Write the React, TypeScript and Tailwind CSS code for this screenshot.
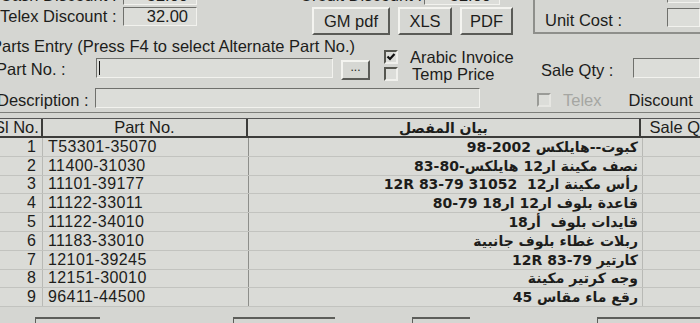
import React from 'react'

const sunken = 'border border-t-[#6f706c] border-l-[#6f706c] border-b-[#f2f2ee] border-r-[#f2f2ee] bg-[#dcddd9]'
const raised = 'border-2 border-t-[#f4f4f0] border-l-[#f4f4f0] border-b-[#5a5b57] border-r-[#5a5b57] bg-[#d6d7d3]'

const rows = [
  { no: 1, part: 'T53301-35070', desc: 'كبوت--هايلكس 2002-98' },
  { no: 2, part: '11400-31030', desc: 'نصف مكينة ار12 هايلكس-80-83' },
  { no: 3, part: '11101-39177', desc: 'رأس مكينة ار12  31052 79-83 12R ' },
  { no: 4, part: '11122-33011', desc: 'قاعدة بلوف ار12 ار18 79-80' },
  { no: 5, part: '11122-34010', desc: 'قايدات بلوف  أر18 ' },
  { no: 6, part: '11183-33010', desc: 'ربلات غطاء بلوف جانبية' },
  { no: 7, part: '12101-39245', desc: 'كارتير 79-83 12R ' },
  { no: 8, part: '12151-30010', desc: 'وجه كرتير مكينة' },
  { no: 9, part: '96411-44500', desc: 'رقع ماء مقاس 45' },
]

function Check({ checked, disabled }: { checked?: boolean; disabled?: boolean }) {
  return (
    <span
      className={`flex h-[14px] w-[14px] shrink-0 items-center justify-center border-2 ${
        disabled ? 'border-t-[#9a9b97] border-l-[#9a9b97] border-b-[#e6e6e2] border-r-[#e6e6e2]' : 'border-t-[#55564f] border-l-[#55564f] border-b-[#f0f0ec] border-r-[#f0f0ec]'
      } bg-[#dcddd9]`}
    >
      {checked && (
        <svg width="10" height="10" viewBox="0 0 10 10">
          <path d="M1.5 4.5 L4 7 L8.5 2" stroke="#111" strokeWidth="2.2" fill="none" />
        </svg>
      )}
    </span>
  )
}

export default function App() {
  return (
    <div className="h-[323px] w-[700px] overflow-hidden bg-[#d5d6d2] text-[16.5px] leading-none text-[#1d1d1b] [font-family:'Liberation_Sans',Arial,sans-serif]">
      {/* top area */}
      <div className="-mt-[14px] flex h-[48px]">
        <div className="flex w-[533px] flex-col">
          <div className="flex h-[22px] items-center">
            <span className="w-[123px] whitespace-nowrap">Cash Discount :</span>
            <span className={`flex h-[19px] w-[74px] items-center justify-end pr-2 ${sunken}`}>32.00</span>
            <span className="ml-[103px] w-[124px] whitespace-nowrap">Credit Discount :</span>
            <span className={`flex h-[19px] w-[76px] items-center justify-end pr-2 ${sunken}`}>32.00</span>
          </div>
          <div className="flex items-start pt-[2px]">
            <div className="flex h-[19px] items-center">
              <span className="w-[123px] whitespace-nowrap">Telex Discount :</span>
              <span className={`flex h-[19px] w-[74px] items-center justify-end pr-2 ${sunken}`}>32.00</span>
            </div>
            <div className="ml-[115px] flex gap-[8px]">
              <button className={`h-[28px] w-[78px] ${raised}`}>GM pdf</button>
              <button className={`h-[28px] w-[54px] ${raised}`}>XLS</button>
              <button className={`h-[28px] w-[53px] ${raised}`}>PDF</button>
            </div>
          </div>
        </div>
        <div className="flex flex-1 flex-col border-b-2 border-l-2 border-b-[#8e8f8b] border-l-[#8e8f8b]">
          <div className="flex h-[17px] justify-end">
            <span className={`h-[17px] w-[33px] ${sunken}`} />
          </div>
          <div className="mt-[5px] flex items-start">
            <span className="ml-[10px] mt-[4px] whitespace-nowrap">Unit Cost :</span>
            <span className={`ml-auto h-[19px] w-[33px] ${sunken}`} />
          </div>
        </div>
      </div>

      {/* parts entry */}
      <div className="flex">
        <div className="flex w-[384px] flex-col">
          <div className="-ml-[9px] mt-[4px] h-[16px] whitespace-nowrap">Parts Entry (Press F4 to select Alternate Part No.)</div>
          <div className="mt-[4px] flex items-start">
            <span className="-ml-[4px] mt-[3px] w-[100px] whitespace-nowrap">Part No. :</span>
            <span className={`flex h-[20px] w-[237px] items-center pl-[2px] ${sunken}`}>
              <span className="h-[14px] w-px bg-[#111]" />
            </span>
            <button className={`ml-[8px] mt-[2px] flex h-[20px] w-[29px] items-center justify-center pb-[6px] text-[12px] ${raised}`}>...</button>
          </div>
        </div>
        <div className="flex w-[157px] flex-col gap-[0.5px] pt-[15px]">
          <div className="flex items-center gap-[12px]">
            <Check checked />
            <span>Arabic Invoice</span>
          </div>
          <div className="flex items-center gap-[14px]">
            <Check />
            <span>Temp Price</span>
          </div>
        </div>
        <div className="flex flex-1 items-start pt-[24px]">
          <span className="mt-[4px] whitespace-nowrap">Sale Qty :</span>
          <span className={`ml-auto h-[20px] w-[67px] ${sunken}`} />
        </div>
      </div>

      <div className="mt-[5px] flex items-start">
        <span className="-ml-[3px] mt-[4px] w-[98px] whitespace-nowrap">Description :</span>
        <span className={`h-[20px] w-[385px] ${sunken}`} />
        <div className="ml-[57px] mt-[4px] flex items-center">
          <Check disabled />
          <span className="ml-[12px] text-[#a5a6a2]">Telex</span>
          <span className="ml-[27px]">Discount</span>
        </div>
      </div>

      <div className="mt-[4px] h-px bg-[#7d7e7a]" />

      {/* grid */}
      <div className="mt-[5px] border-t border-[#555]">
        <div className="flex h-[19px] border-b-2 border-[#3c3c3a] bg-[#d9dad6]">
          <div className="flex w-[43px] items-center justify-end overflow-hidden whitespace-nowrap border-r-2 border-[#3c3c3a] pr-[2px]">Sl No.</div>
          <div className="flex w-[206px] items-center justify-center border-r-2 border-[#3c3c3a]">Part No.</div>
          <div className="flex w-[394px] items-center justify-center border-r-2 border-[#3c3c3a] text-[14px] font-bold [font-family:'DejaVu_Sans',sans-serif]" dir="rtl">بيان المفصل</div>
          <div className="flex flex-1 items-center whitespace-nowrap pl-[9px]">Sale Q</div>
        </div>
        {rows.map((r) => (
          <div key={r.no} className="flex h-[18.8px] border-b border-[#c2c3bf] bg-[#dadbd7]">
            <div className="flex w-[43px] items-center justify-end border-r border-[#b8b9b5] pr-[6px] text-[16px]">{r.no}</div>
            <div className="flex w-[206px] items-center border-r border-[#8d8e8a] pl-[5px] text-[16px] tracking-[0.4px]">{r.part}</div>
            <div
              dir="rtl"
              className="flex w-[394px] items-center whitespace-pre border-r border-[#b8b9b5] pr-[4px] text-[14px] font-bold [font-family:'DejaVu_Sans',sans-serif]"
            >
              {r.desc}
            </div>
            <div className="flex-1" />
          </div>
        ))}
      </div>

      {/* bottom controls peeking in */}
      <div className="mt-[10px] flex">
        <span className="ml-[35px] h-[8px] w-[65px] border-l border-t-2 border-[#5d5e5a]" />
        <span className="ml-[133px] h-[8px] w-[102px] border-l border-t-2 border-[#5d5e5a]" />
        <span className="ml-[77px] h-[8px] w-[58px] border-l border-t-2 border-[#5d5e5a]" />
        <span className="ml-[127px] h-[8px] flex-1 border-l border-t-2 border-[#5d5e5a]" />
      </div>
    </div>
  )
}
